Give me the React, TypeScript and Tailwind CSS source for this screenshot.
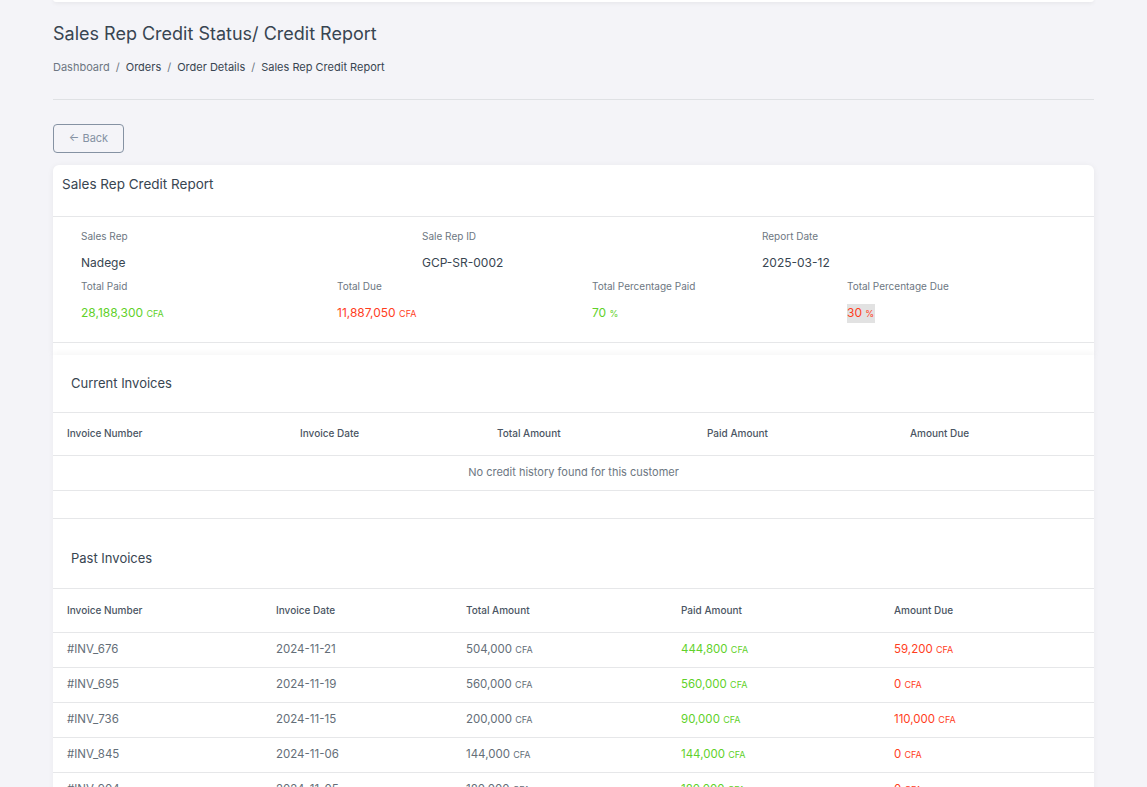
const font = { fontFamily: "Inter, 'Noto Sans', sans-serif" };

type Row = { no: string; date: string; total: string; paid: string; due: string };

const rows: Row[] = [
  { no: "#INV_676", date: "2024-11-21", total: "504,000", paid: "444,800", due: "59,200" },
  { no: "#INV_695", date: "2024-11-19", total: "560,000", paid: "560,000", due: "0" },
  { no: "#INV_736", date: "2024-11-15", total: "200,000", paid: "90,000", due: "110,000" },
  { no: "#INV_845", date: "2024-11-06", total: "144,000", paid: "144,000", due: "0" },
  { no: "#INV_904", date: "2024-11-05", total: "180,000", paid: "180,000", due: "0" },
];

function Money({ v, unit = "CFA", className }: { v: string; unit?: string; className: string }) {
  return (
    <span className={className}>
      {v} <span className="text-[9px]">{unit}</span>
    </span>
  );
}

function Info({ label, children }: { label: string; children: React.ReactNode }) {
  return (
    <div>
      <div className="h-4 leading-4 text-[10px] text-[#6d7782]">{label}</div>
      <div className="mt-[10px] h-[18px] leading-[18px] text-[12px]">{children}</div>
    </div>
  );
}

export default function App() {
  const headCls = "border-b border-[#e6e7e9] text-[10px] font-medium text-[#4a5563]";
  return (
    <div style={font} className="min-h-screen bg-[#f4f4f8] text-[#384551]">
      <div className="mx-auto w-[1041px]">
        <div className="h-[3px] -mt-px rounded-b-md bg-white shadow-[0_1px_4px_rgba(0,0,0,0.08)]" />

        <h1 className="mt-[20px] text-[18px] leading-[24px] text-[#384551]">
          Sales Rep Credit Status/ Credit Report
        </h1>
        <div className="mt-[13px] flex items-center gap-[6px] text-[11px] leading-4">
          <span className="text-[#6d7782]">Dashboard</span>
          <span className="text-[#6d7782]">/</span>
          <span>Orders</span>
          <span className="text-[#6d7782]">/</span>
          <span>Order Details</span>
          <span className="text-[#6d7782]">/</span>
          <span>Sales Rep Credit Report</span>
        </div>
        <div className="mt-[24px] h-px bg-[#dfe1e4]" />

        <button className="mt-[24px] h-[29px] w-[71px] rounded-[4px] border border-[#8592a3] text-[11px] text-[#8592a3]">
          ← Back
        </button>

        <div className="mt-[12px] rounded-t-md bg-white shadow-[0_1px_6px_rgba(0,0,0,0.06)]">
          <div className="flex h-[52px] items-start border-b border-[#e6e7e9] px-[9px] pt-[11px] text-[13.5px] leading-4">
            Sales Rep Credit Report
          </div>
          <div className="border-b border-[#e6e7e9] pl-[28px] pt-[11px] pb-[20px]">
            <div className="grid grid-cols-[341px_340px_1fr]">
              <Info label="Sales Rep">Nadege</Info>
              <Info label="Sale Rep ID">GCP-SR-0002</Info>
              <Info label="Report Date">2025-03-12</Info>
            </div>
            <div className="mt-[6px] grid grid-cols-[256px_255px_255px_1fr]">
              <Info label="Total Paid">
                <Money v="28,188,300" className="text-[#5fd12a]" />
              </Info>
              <Info label="Total Due">
                <Money v="11,887,050" className="text-[#ff3e1d]" />
              </Info>
              <Info label="Total Percentage Paid">
                <Money v="70" unit="%" className="text-[#5fd12a]" />
              </Info>
              <Info label="Total Percentage Due">
                <span className="inline-block bg-[#e2e2e2] pr-[1px] text-[#ff3e1d]">
                  30 <span className="text-[9px]">%</span>
                </span>
              </Info>
            </div>
          </div>
          <div className="h-[12px]" />
        </div>

        <div className="bg-white shadow-[0_-2px_6px_rgba(0,0,0,0.04)]">
          <div className="flex h-[58px] items-center border-b border-[#e6e7e9] px-[18px] text-[13px]">
            Current Invoices
          </div>
          <table className="w-full table-fixed border-collapse text-left">
            <colgroup>
              <col className="w-[233px]" />
              <col className="w-[197px]" />
              <col className="w-[210px]" />
              <col className="w-[203px]" />
              <col />
            </colgroup>
            <thead>
              <tr className={`h-[42px] ${headCls}`}>
                <th className="pl-[14px] font-medium">Invoice Number</th>
                <th className="pl-[14px] font-medium">Invoice Date</th>
                <th className="pl-[14px] font-medium">Total Amount</th>
                <th className="pl-[14px] font-medium">Paid Amount</th>
                <th className="pl-[14px] font-medium">Amount Due</th>
              </tr>
            </thead>
            <tbody>
              <tr className="h-[35px] border-b border-[#e6e7e9]">
                <td colSpan={5} className="text-center text-[11px] text-[#6d7782]">
                  No credit history found for this customer
                </td>
              </tr>
              <tr className="h-[28px] border-b border-[#e6e7e9]">
                <td colSpan={5} />
              </tr>
            </tbody>
          </table>

          <div className="flex h-[70px] items-center border-b border-[#e6e7e9] px-[18px] pt-[12px] text-[13px]">
            Past Invoices
          </div>
          <table className="w-full table-fixed border-collapse text-left">
            <colgroup>
              <col className="w-[209px]" />
              <col className="w-[190px]" />
              <col className="w-[215px]" />
              <col className="w-[213px]" />
              <col />
            </colgroup>
            <thead>
              <tr className={`h-[44px] ${headCls}`}>
                <th className="pl-[14px] font-medium">Invoice Number</th>
                <th className="pl-[14px] font-medium">Invoice Date</th>
                <th className="pl-[14px] font-medium">Total Amount</th>
                <th className="pl-[14px] font-medium">Paid Amount</th>
                <th className="pl-[14px] font-medium">Amount Due</th>
              </tr>
            </thead>
            <tbody className="text-[11.5px] text-[#646e78]">
              {rows.map((r) => (
                <tr key={r.no} className="h-[35px] border-b border-[#e6e7e9]">
                  <td className="pl-[14px]">{r.no}</td>
                  <td className="pl-[14px]">{r.date}</td>
                  <td className="pl-[14px]">
                    <Money v={r.total} className="" />
                  </td>
                  <td className="pl-[14px]">
                    <Money v={r.paid} className="text-[#5fd12a]" />
                  </td>
                  <td className="pl-[14px]">
                    <Money v={r.due} className="text-[#ff3e1d]" />
                  </td>
                </tr>
              ))}
            </tbody>
          </table>
        </div>
      </div>
    </div>
  );
}
